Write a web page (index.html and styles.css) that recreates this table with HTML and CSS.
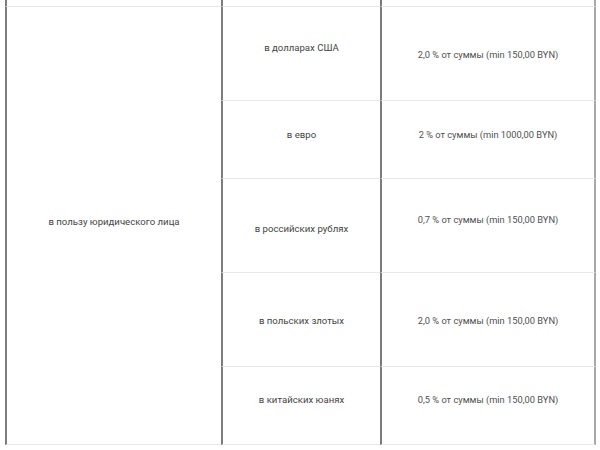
FILE: index.html
```html
<!DOCTYPE html>
<html lang="ru">
<head>
<meta charset="utf-8">
<link rel="stylesheet" href="styles.css">
</head>
<body>
<div class="table">
  <div class="cell stub"></div>
  <div class="cell stub"></div>
  <div class="cell stub last"></div>

  <div class="cell main"><span class="up4">в пользу юридического лица</span></div>

  <div class="cell r94"><span class="up6">в долларах США</span></div>
  <div class="cell r94 last"><span class="fee down1">2,0 % от суммы (min 150,00 BYN)</span></div>

  <div class="cell r78"><span class="up5">в евро</span></div>
  <div class="cell r78 last"><span class="fee up5">2 % от суммы (min 1000,00 BYN)</span></div>

  <div class="cell r94"><span class="down3">в российских рублях</span></div>
  <div class="cell r94 last"><span class="fee up6">0,7 % от суммы (min 150,00 BYN)</span></div>

  <div class="cell r94"><span class="down1">в польских злотых</span></div>
  <div class="cell r94 last"><span class="fee down1">2,0 % от суммы (min 150,00 BYN)</span></div>

  <div class="cell r78"><span class="up6">в китайских юанях</span></div>
  <div class="cell r78 last"><span class="fee up6">0,5 % от суммы (min 150,00 BYN)</span></div>
</div>
</body>
</html>
```
FILE: styles.css
```css
html, body {
  margin: 0;
  padding: 0;
  background: #fff;
}
body {
  font-family: Roboto, "Liberation Sans", Arial, sans-serif;
  font-size: 9.6px;
  color: #444;
}
.table {
  margin-left: 5px;
  width: 591px;
  display: grid;
  grid-template-columns: 216px 159px 216px;
  grid-template-rows: 7px 94px 78px 94px 94px 78px;
}
.cell {
  box-sizing: border-box;
  border-left: 2px solid #7c7c7c;
  border-bottom: 1px solid #e8e8e8;
  display: flex;
  align-items: center;
  justify-content: center;
  text-align: center;
  line-height: 13px;
}
.cell.last {
  border-right: 2px solid #a8a8a8;
}
.main {
  grid-row: 2 / span 5;
  grid-column: 1;
}
.fee {
  font-size: 9.3px;
  color: #505050;
}
.up4 { position: relative; top: -4px; }
.up5 { position: relative; top: -5px; }
.up6 { position: relative; top: -6px; }
.down1 { position: relative; top: 1px; }
.down3 { position: relative; top: 3px; }
```
